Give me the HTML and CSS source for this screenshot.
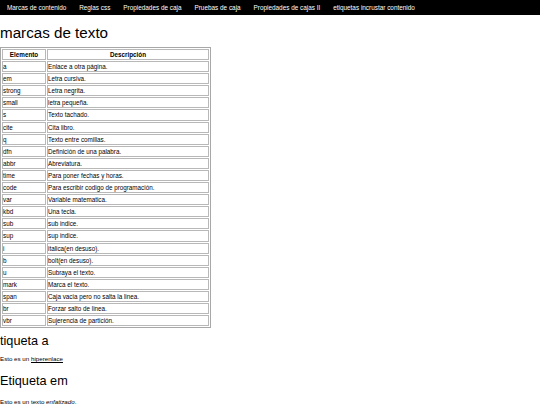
FILE: index.html
```html
<!DOCTYPE html>
<html lang="es">
<head>
<meta charset="utf-8">
<title>marcas de texto</title>
<link rel="stylesheet" href="styles.css">
</head>
<body>
<nav class="topnav">
  <a href="#">Marcas de contenido</a>
  <a href="#">Reglas css</a>
  <a href="#">Propiedades de caja</a>
  <a href="#">Pruebas de caja</a>
  <a href="#">Propiedades de cajas II</a>
  <a href="#">etiquetas incrustar contenido</a>
</nav>
<h1 class="title">marcas de texto</h1>
<table class="tags">
  <tr><th class="c1">Elemento</th><th>Descripción</th></tr>
  <tr><td>a</td><td>Enlace a otra página.</td></tr>
  <tr><td>em</td><td>Letra cursiva.</td></tr>
  <tr><td>strong</td><td>Letra negrita.</td></tr>
  <tr><td>small</td><td>letra pequeña.</td></tr>
  <tr><td>s</td><td>Texto tachado.</td></tr>
  <tr><td>cite</td><td>Cita libro.</td></tr>
  <tr><td>q</td><td>Texto entre comillas.</td></tr>
  <tr><td>dfn</td><td>Definición de una palabra.</td></tr>
  <tr><td>abbr</td><td>Abreviatura.</td></tr>
  <tr><td>time</td><td>Para poner fechas y horas.</td></tr>
  <tr><td>code</td><td>Para escribir codigo de programación.</td></tr>
  <tr><td>var</td><td>Variable matematica.</td></tr>
  <tr><td>kbd</td><td>Una tecla.</td></tr>
  <tr><td>sub</td><td>sub indice.</td></tr>
  <tr><td>sup</td><td>sup indice.</td></tr>
  <tr><td>i</td><td>italica(en desuso).</td></tr>
  <tr><td>b</td><td>bolt(en desuso).</td></tr>
  <tr><td>u</td><td>Subraya el texto.</td></tr>
  <tr><td>mark</td><td>Marca el texto.</td></tr>
  <tr><td>span</td><td>Caja vacia pero no salta la linea.</td></tr>
  <tr><td>br</td><td>Forzar salto de linea.</td></tr>
  <tr><td>vbr</td><td>Sujerencia de partición.</td></tr>
</table>
<h2 class="sub">tiqueta a</h2>
<p class="text">Esto es un <a href="#" class="link">hiperenlace</a></p>
<h2 class="sub">Etiqueta em</h2>
<p class="text text-em">Esto es un texto <em>enfatizado</em>.</p>
</body>
</html>
```
FILE: styles.css
```css
html, body {
  margin: 0;
  padding: 0;
  background: #fff;
  color: #000;
  font-family: "Liberation Sans", Arial, sans-serif;
}
.topnav {
  display: flex;
  background: #000;
  height: 15px;
  align-items: center;
  padding-left: 0.5px;
}
.topnav a {
  color: #fff;
  text-decoration: none;
  font-size: 6.4px;
  padding: 0 6.45px;
}
.title {
  font-size: 15.2px;
  font-weight: normal;
  margin: 7.5px 0 5.5px 0;
  line-height: 19px;
}
.tags {
  border: 1px solid #a8a8a8;
  border-spacing: 1px;
  font-size: 6.3px;
  width: 211px;
}
.tags th, .tags td {
  border: 1px solid #b8b8b8;
  padding: 0;
  line-height: 9.1px;
  text-align: left;
}
.tags th {
  text-align: center;
  font-weight: bold;
}
.tags .c1 {
  width: 42px;
}
.sub {
  font-size: 12.7px;
  font-weight: normal;
  margin: 5px 0 0 0;
  line-height: 16px;
}
.text {
  font-size: 6.2px;
  margin: 6px 0 10px 0;
  line-height: 8px;
}
.text-em {
  margin-top: 9px;
}
.link {
  color: #000;
}
```
